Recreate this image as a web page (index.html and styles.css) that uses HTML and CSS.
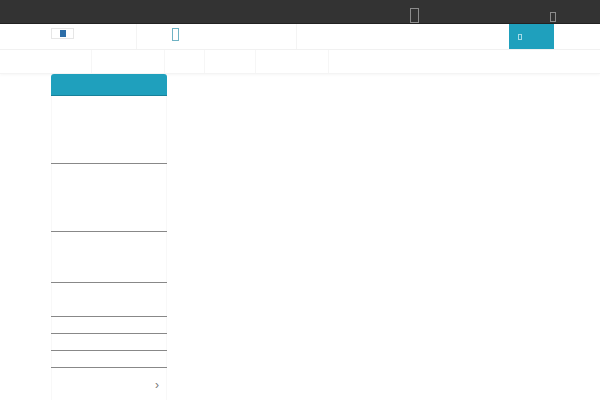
FILE: index.html
```html
<!DOCTYPE html>
<html lang="en">
<head>
    <meta charset="UTF-8">
    <meta name="viewport" content="width=device-width, initial-scale=1.0">
    <title>Shop</title>
    <link rel="stylesheet" href="styles.css">
</head>
<body>
<div class="topbar">
    <span class="top-icon phone"></span>
    <span class="top-icon user"></span>
</div>
<header class="header">
    <div class="logo-cell">
        <div class="logo"><span class="logo-mark"></span></div>
    </div>
    <div class="search-cell"><span class="search-icon"></span></div>
    <div class="cart-cell"><span class="cart-icon"></span></div>
</header>
<nav class="nav">
    <a class="nav-item w1" href="#"></a>
    <a class="nav-item w2" href="#"></a>
    <a class="nav-item w3" href="#"></a>
    <a class="nav-item w4" href="#"></a>
    <a class="nav-item w5" href="#"></a>
</nav>
<aside class="sidebar">
    <div class="side-title"></div>
    <ul class="side-list">
        <li class="side-row h1"></li>
        <li class="side-row h1"></li>
        <li class="side-row h2"></li>
        <li class="side-row h3"></li>
        <li class="side-row h4"></li>
        <li class="side-row h4"></li>
        <li class="side-row h4"></li>
        <li class="side-row last"><span class="chevron">&#x203a;</span></li>
    </ul>
</aside>
</body>
</html>
```

FILE: styles.css
```css
html, body {
    height: 400px;
    overflow: hidden;
}
body {
    margin: 0;
    font-family: "Liberation Sans", Arial, sans-serif;
    background: #fff;
}
.topbar {
    height: 23px;
    background: #333;
    border-bottom: 1px solid #222;
    display: flex;
    align-items: flex-end;
}
.top-icon {
    box-sizing: border-box;
    border: 1px solid #8c8c8c;
}
.phone {
    width: 9px;
    height: 15px;
    margin-left: 410px;
}
.user {
    width: 6px;
    height: 10px;
    margin-left: 131px;
    margin-bottom: 1px;
}
.header {
    height: 25px;
    display: flex;
    border-bottom: 1px solid #f2f2f2;
}
.logo-cell {
    width: 85px;
    margin-left: 51px;
    border-right: 1px solid #f4f4f4;
}
.logo {
    width: 21px;
    height: 9px;
    margin-top: 4px;
    border: 1px solid #e6e6e6;
    display: flex;
    justify-content: center;
    align-items: center;
}
.logo-mark {
    width: 6px;
    height: 7px;
    background: #2d6ea8;
}
.search-cell {
    width: 160px;
    padding: 4px 0 0 35px;
    box-sizing: border-box;
    border-right: 1px solid #f4f4f4;
}
.search-icon {
    display: block;
    box-sizing: border-box;
    width: 7px;
    height: 13px;
    border: 1px solid #6fb3c4;
}
.cart-cell {
    width: 45px;
    margin-left: 212px;
    padding: 10px 0 0 9px;
    box-sizing: border-box;
    background: #1fa0bd;
}
.cart-icon {
    display: block;
    box-sizing: border-box;
    width: 4px;
    height: 6px;
    border: 1px solid #a6dbe7;
}
.nav {
    height: 23px;
    display: flex;
    padding-left: 91px;
    border-bottom: 1px solid #f4f4f4;
    box-shadow: 0 1px 3px rgba(0, 0, 0, 0.04);
}
.nav-item {
    border-right: 1px solid #f6f6f6;
}
.w1 { width: 0; border-left: 1px solid #f6f6f6; border-right: 0; }
.w2 { width: 72px; }
.w3 { width: 39px; }
.w4 { width: 50px; }
.w5 { width: 72px; }
.sidebar {
    width: 116px;
    margin-left: 51px;
}
.side-title {
    height: 21px;
    background: #1fa0bd;
    border-bottom: 1px solid #17819a;
    border-radius: 3px 3px 0 0;
}
.side-list {
    list-style: none;
    margin: 0;
    padding: 0;
    border-left: 1px solid #f8f8f8;
    border-right: 1px solid #f8f8f8;
}
.side-row {
    box-sizing: border-box;
    border-bottom: 1px solid #888;
    margin: 0 -1px;
}
.h1 { height: 68px; }
.h2 { height: 51px; }
.h3 { height: 34px; }
.h4 { height: 17px; }
.last {
    height: 34px;
    border-bottom: 0;
    text-align: right;
    padding-right: 8px;
    line-height: 34px;
    font-size: 12px;
    color: #777;
}
```
